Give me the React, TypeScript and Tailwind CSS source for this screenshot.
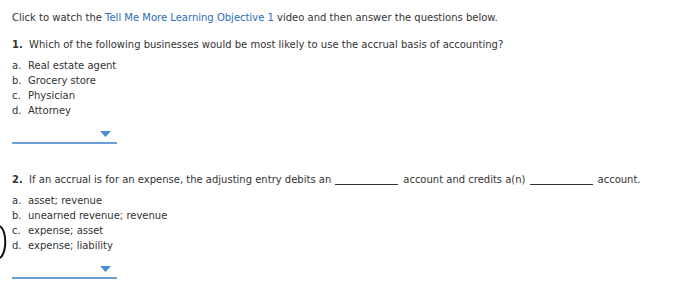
import React from "react";

function Dropdown() {
  return (
    <div className="relative w-[105px] h-[21px] border-b-2 border-[#6a9fd4]">
      <svg className="absolute right-[6px] top-[8px]" width="11" height="6" viewBox="0 0 11 6">
        <polygon points="0,0 11,0 5.5,6" fill="#4a8fd1" />
      </svg>
    </div>
  );
}

function Options({ items }: { items: [string, string][] }) {
  return (
    <div className="flex flex-col">
      {items.map(([l, t]) => (
        <div key={l} className="flex h-[15px] items-center leading-[15px]">
          <span className="w-[16px]">{l}</span>
          <span>{t}</span>
        </div>
      ))}
    </div>
  );
}

export default function App() {
  return (
    <div
      className="relative w-[700px] h-[306px] bg-white text-[#333] text-[10px] pl-[12px] pt-[10px]"
      style={{ fontFamily: '"DejaVu Sans", Verdana, sans-serif' }}
    >
      <div className="h-[15px] leading-[15px]">
        Click to watch the <span className="text-[#2b6cb8]">Tell Me More Learning Objective 1</span> video and then answer the questions below.
      </div>
      <div className="h-[15px] leading-[15px] mt-[12px]">
        <span className="font-bold">1.</span>&nbsp; Which of the following businesses would be most likely to use the accrual basis of accounting?
      </div>
      <div className="mt-[6px]">
        <Options
          items={[
            ["a.", "Real estate agent"],
            ["b.", "Grocery store"],
            ["c.", "Physician"],
            ["d.", "Attorney"],
          ]}
        />
      </div>
      <div className="mt-[5px]">
        <Dropdown />
      </div>
      <div className="h-[15px] leading-[15px] mt-[28px] flex items-center">
        <span className="font-bold">2.</span>&nbsp; If an accrual is for an expense, the adjusting entry debits an
        <span className="inline-block w-[63px] border-b border-[#333] h-[10px] ml-[4px] mr-[5px]" />
        account and credits a(n)
        <span className="inline-block w-[63px] border-b border-[#333] h-[10px] ml-[4px] mr-[5px]" />
        account.
      </div>
      <div className="mt-[6px]">
        <Options
          items={[
            ["a.", "asset; revenue"],
            ["b.", "unearned revenue; revenue"],
            ["c.", "expense; asset"],
            ["d.", "expense; liability"],
          ]}
        />
      </div>
      <div className="mt-[5px]">
        <Dropdown />
      </div>
      <svg className="absolute left-0 top-[224px]" width="8" height="36" viewBox="0 0 8 36">
        <path d="M0 2 C 7 8, 7 28, 0 34" stroke="#111" strokeWidth="2" fill="none" />
      </svg>
    </div>
  );
}
